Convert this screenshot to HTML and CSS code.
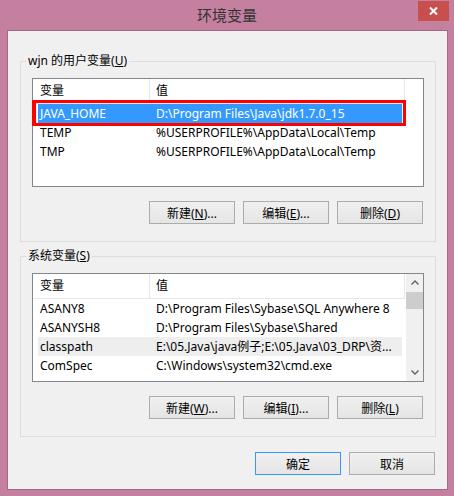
FILE: index.html
```html
<!DOCTYPE html>
<html lang="zh-CN">
<head>
<meta charset="utf-8">
<title>环境变量</title>
<link rel="stylesheet" href="styles.css">
</head>
<body>
<div class="titlebar">
  <span class="title">环境变量</span>
  <div class="close">
    <svg width="9" height="8" viewBox="0 0 9 8"><path d="M1 0.5 L8 7.5 M8 0.5 L1 7.5" stroke="#fff" stroke-width="2" fill="none"/></svg>
  </div>
</div>
<div class="panel">
  <section class="group">
    <div class="legend">wjn 的用户变量(<u>U</u>)</div>
    <div class="list">
      <div class="lv-body">
        <div class="lv-head"><div class="c1">变量</div><div class="c2">值</div></div>
        <div class="lv-row sel"><div class="c1">JAVA_HOME</div><div class="c2">D:\Program Files\Java\jdk1.7.0_15</div></div>
        <div class="lv-row"><div class="c1">TEMP</div><div class="c2">%USERPROFILE%\AppData\Local\Temp</div></div>
        <div class="lv-row"><div class="c1">TMP</div><div class="c2">%USERPROFILE%\AppData\Local\Temp</div></div>
      </div>
    </div>
    <div class="btns">
      <button class="btn">新建(<u>N</u>)...</button>
      <button class="btn">编辑(<u>E</u>)...</button>
      <button class="btn">删除(<u>D</u>)</button>
    </div>
  </section>
  <section class="group group2">
    <div class="legend">系统变量(<u>S</u>)</div>
    <div class="list">
      <div class="lv-body">
        <div class="lv-head"><div class="c1">变量</div><div class="c2">值</div></div>
        <div class="lv-row"><div class="c1">ASANY8</div><div class="c2">D:\Program Files\Sybase\SQL Anywhere 8</div></div>
        <div class="lv-row"><div class="c1">ASANYSH8</div><div class="c2">D:\Program Files\Sybase\Shared</div></div>
        <div class="lv-row hot"><div class="c1">classpath</div><div class="c2">E:\05.Java\java例子;E:\05.Java\03_DRP\资...</div></div>
        <div class="lv-row"><div class="c1">ComSpec</div><div class="c2">C:\Windows\system32\cmd.exe</div></div>
      </div>
      <div class="scrollbar">
        <div class="sb-btn"><svg width="8" height="5" viewBox="0 0 8 5"><path d="M0.5 4.5 L4 1 L7.5 4.5" stroke="#606060" stroke-width="1.4" fill="none"/></svg></div>
        <div class="sb-thumb"></div>
        <div class="sb-track"></div>
        <div class="sb-btn"><svg width="8" height="5" viewBox="0 0 8 5"><path d="M0.5 0.5 L4 4 L7.5 0.5" stroke="#606060" stroke-width="1.4" fill="none"/></svg></div>
      </div>
    </div>
    <div class="btns">
      <button class="btn">新建(<u>W</u>)...</button>
      <button class="btn">编辑(<u>I</u>)...</button>
      <button class="btn">删除(<u>L</u>)</button>
    </div>
  </section>
  <div class="dialog-btns">
    <button class="btn default">确定</button>
    <button class="btn">取消</button>
  </div>
</div>
</body>
</html>
```
FILE: styles.css
```css
html, body {
  margin: 0;
  padding: 0;
}
body {
  width: 454px;
  height: 496px;
  overflow: hidden;
  background: #c5809f;
  font-family: "Noto Sans", "Noto Sans CJK SC", sans-serif;
  font-size: 12px;
  color: #000;
}
.titlebar {
  height: 30px;
  display: grid;
  grid-template-columns: 1fr auto 1fr;
  align-items: start;
}
.title {
  grid-column: 2;
  font-family: "Noto Sans CJK SC", sans-serif;
  font-size: 15px;
  line-height: 30px;
  color: #333;
}
.close {
  grid-column: 3;
  justify-self: end;
  margin: 1px 5px 0 0;
  width: 31px;
  height: 20px;
  background: #c7504f;
  display: flex;
  align-items: center;
  justify-content: center;
}
.panel {
  box-sizing: border-box;
  margin: 0 6px 0 7px;
  height: 460px;
  border: 1px solid #a66a88;
  background: #f0f0f0;
  padding: 30px 11px 0 12px;
}
.group {
  border: 1px solid #dcdcdc;
  padding: 0 11px 17px 11px;
}
.group2 {
  margin-top: 14px;
}
.legend {
  width: fit-content;
  margin: -9px 0 0 -6px;
  padding: 0 2px;
  line-height: 16px;
  background: #f0f0f0;
}
.list {
  box-sizing: border-box;
  margin-top: 9px;
  height: 109px;
  border: 1px solid #828790;
  background: #fff;
  display: flex;
}
.lv-body {
  width: 373px;
}
.lv-head {
  box-sizing: border-box;
  display: flex;
  width: 372px;
  height: 25px;
  border-bottom: 1px solid #e3e8ef;
}
.lv-head .c1 {
  box-sizing: border-box;
  width: 117px;
  padding-left: 7px;
  border-right: 1px solid #e3e8ef;
  line-height: 24px;
}
.lv-head .c2 {
  box-sizing: border-box;
  width: 255px;
  padding-left: 6px;
  border-right: 1px solid #e3e8ef;
  line-height: 24px;
}
.lv-row {
  display: flex;
  width: 364px;
  height: 19px;
  margin-left: 5px;
  line-height: 19px;
  white-space: nowrap;
}
.lv-row .c1 {
  box-sizing: border-box;
  width: 118px;
  padding-left: 2px;
  overflow: hidden;
}
.lv-row .c2 {
  flex: 1;
  overflow: hidden;
}
.sel {
  position: relative;
  background: #3399ff;
  color: #fff;
}
.sel::after {
  content: "";
  position: absolute;
  left: -6px;
  top: -4px;
  right: -4px;
  bottom: -3px;
  border: 3px solid #ff0000;
  border-left-width: 4px;
}
.hot {
  background: #eeeeee;
}
.scrollbar {
  width: 17px;
  background: #f0f0f0;
  display: flex;
  flex-direction: column;
}
.sb-btn {
  height: 17px;
  display: flex;
  align-items: center;
  justify-content: center;
}
.sb-thumb {
  height: 17px;
  margin-top: 1px;
  background: #cdcdcd;
}
.sb-track {
  flex: 1;
}
.btns {
  display: flex;
  justify-content: flex-end;
  gap: 8px;
  margin: 14px 1px 0 0;
}
.btn {
  box-sizing: border-box;
  width: 86px;
  height: 23px;
  padding: 0;
  border: 1px solid #acacac;
  background: linear-gradient(#f0f0f0, #e5e5e5);
  font: inherit;
  color: #000;
}
.btn.default {
  border-color: #3399ff;
}
.dialog-btns {
  display: flex;
  justify-content: flex-end;
  gap: 8px;
  margin: 15px 1px 0 0;
}
```
